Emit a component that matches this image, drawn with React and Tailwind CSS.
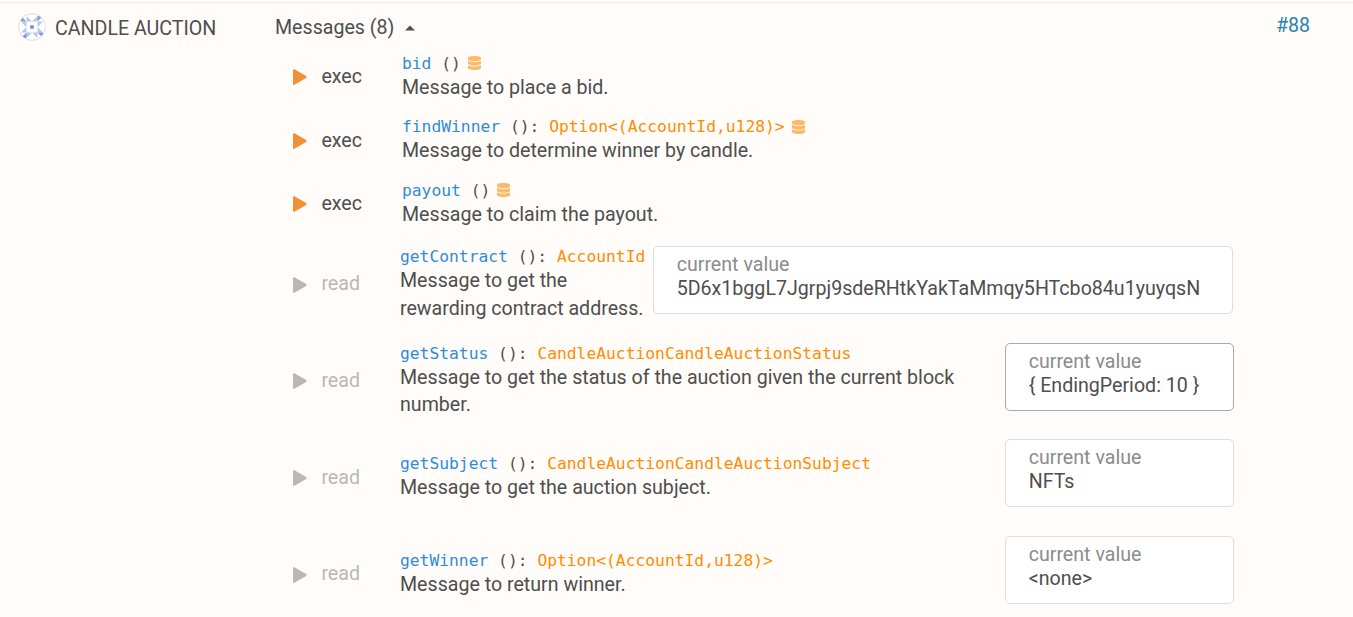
const MESSAGES = [
  { kind: 'exec', name: 'bid', mutates: true, docs: ['Message to place a bid.'] },
  { kind: 'exec', name: 'findWinner', type: 'Option<(AccountId,u128)>', mutates: true, docs: ['Message to determine winner by candle.'] },
  { kind: 'exec', name: 'payout', mutates: true, docs: ['Message to claim the payout.'] },
  { kind: 'read', name: 'getContract', type: 'AccountId', docs: ['Message to get the', 'rewarding contract address.'], value: '5D6x1bggL7Jgrpj9sdeRHtkYakTaMmqy5HTcbo84u1yuyqsN', box: 'ml-[253px] w-[580px] border-[#dededf]' },
  { kind: 'read', name: 'getStatus', type: 'CandleAuctionCandleAuctionStatus', docs: ['Message to get the status of the auction given the current block', 'number.'], value: '{ EndingPeriod: 10 }', box: 'ml-[605px] w-[229px] border-[#a9a9aa]' },
  { kind: 'read', name: 'getSubject', type: 'CandleAuctionCandleAuctionSubject', docs: ['Message to get the auction subject.'], value: 'NFTs', box: 'ml-[605px] w-[229px] border-[#dededf]' },
  { kind: 'read', name: 'getWinner', type: 'Option<(AccountId,u128)>', docs: ['Message to return winner.'], value: '<none>', box: 'ml-[605px] w-[229px] border-[#dededf]' },
];

function Play({ className }) {
  return (
    <svg width="14" height="16" viewBox="0 0 14 16" className={className} fill="currentColor">
      <path d="M0 1.1C0 .3.8-.1 1.5.3L13.1 7.1c.7.4.7 1.4 0 1.8L1.5 15.7C.8 16.1 0 15.7 0 14.9Z" />
    </svg>
  );
}

function Database() {
  return (
    <svg width="13" height="14" viewBox="0 0 448 512" preserveAspectRatio="none" className="-mt-px ml-[7px] shrink-0 text-[#ffb866]" fill="currentColor">
      <path d="M448 73.143v45.714C448 159.143 347.667 192 224 192S0 159.143 0 118.857V73.143C0 32.857 100.333 0 224 0s224 32.857 224 73.143zM448 176v102.857C448 319.143 347.667 352 224 352S0 319.143 0 278.857V176c48.125 33.143 136.208 48.572 224 48.572S399.874 209.143 448 176zm0 160v102.857C448 479.143 347.667 512 224 512S0 479.143 0 438.857V336c48.125 33.143 136.208 48.572 224 48.572S399.874 369.143 448 336z" />
    </svg>
  );
}

function Identicon() {
  const quarter = (
    <g>
      <path d="M3 3v5.500h5.500z" fill="#8299db" />
      <path d="M8.500 3v5.500h5.500z M14 8.500h5.500v-5.500z" fill="#b9c6ee" />
    </g>
  );
  return (
    <svg width="28" height="28" viewBox="0 0 28 28">
      <defs>
        <clipPath id="disc"><circle cx="14" cy="14" r="13" /></clipPath>
      </defs>
      <circle cx="14" cy="14" r="13.400" fill="#fff" stroke="#dcdcdc" />
      <g clipPath="url(#disc)">
        {quarter}
        <g transform="rotate(90 14 14)">{quarter}</g>
        <g transform="rotate(180 14 14)">{quarter}</g>
        <g transform="rotate(270 14 14)">{quarter}</g>
      </g>
      <path d="M13 12h2l1 1v2l-1 1h-2l-1-1v-2z" fill="#7f96d8" />
    </svg>
  );
}

function MessageRow({ message }) {
  const exec = message.kind === 'exec';
  return (
    <div className={exec ? 'flex h-[63.500px] items-center' : 'flex h-[96.720px] items-center'}>
      <div className={exec ? 'flex w-[109px] items-center text-[#4e4e4e]' : 'flex w-[107px] items-center text-[#b9b8b7]'}>
        <Play className={exec ? 'mt-px text-[#f19135]' : 'mt-px text-[#b9b8b7]'} />
        <span className="ml-[14.400px]">{message.kind}</span>
      </div>
      <div className="grid flex-1 items-center self-stretch">
        <div className="col-start-1 row-start-1">
          <div className="flex h-[21px] items-center pt-px font-['DejaVu_Sans_Mono',monospace] text-[16.310px] whitespace-pre">
            <span className="text-[#2e8cd9]">{message.name}</span>
            <span>{message.type ? ' (): ' : ' ()'}</span>
            {message.type && <span className="text-[#ff8c00]">{message.type}</span>}
            {message.mutates && <Database />}
          </div>
          {message.docs.map((line) => (
            <div key={line} className="leading-[27.200px] whitespace-nowrap">{line}</div>
          ))}
        </div>
        {message.value && (
          <div className={`col-start-1 row-start-1 mt-[10.200px] h-[68px] self-start rounded-[5px] border bg-white pt-[6px] pl-[22.700px] leading-[24px] ${message.box}`}>
            <div className="text-[#8c8c8c]">current value</div>
            <div>{message.value}</div>
          </div>
        )}
      </div>
    </div>
  );
}

export default function App() {
  return (
    <div className="flex h-[617px] w-[1353px] flex-col overflow-hidden bg-[#fffcf9] pt-[2px] font-[Roboto,sans-serif] text-[19.620px] text-[#4e4e4e]">
      <div className="flex flex-1 items-start border-t border-[#eeecec]">
        <div className="flex h-[49px] w-[275px] items-center pl-[18px]">
          <div className="-mt-px"><Identicon /></div>
          <span className="ml-[9px] pt-[2px]">CANDLE AUCTION</span>
        </div>
        <div className="flex-1">
          <div className="flex h-[42.200px] items-center justify-between">
            <div className="flex items-center pt-[8px]">
              Messages (8)
              <svg width="10" height="6" viewBox="0 0 10 6" className="ml-[11px]" fill="currentColor"><path d="M0 5.500 5 .5l5 5z" /></svg>
            </div>
            <a className="pt-[4px] pr-[43px] text-[#2683b2]">#88</a>
          </div>
          <div className="pl-[18px]">
            {MESSAGES.map((message) => <MessageRow key={message.name} message={message} />)}
          </div>
        </div>
      </div>
    </div>
  );
}
